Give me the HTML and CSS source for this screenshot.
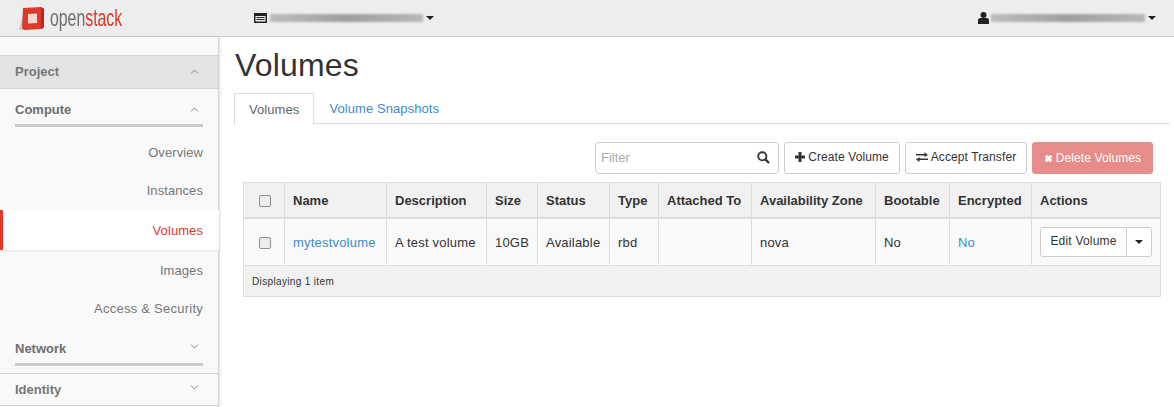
FILE: index.html
```html
<!DOCTYPE html>
<html lang="en">
<head>
    <meta charset="UTF-8">
    <title>Volumes</title>
    <link rel="stylesheet" href="styles.css">
</head>
<body>
    <header class="topbar">
        <div class="brand">
            <svg class="brand-mark" width="26" height="25" viewBox="0 0 26 25">
                <path d="M0 24 L4 9 L5 24 Z" fill="#c9c9c9"/>
                <path d="M4 2 L22 1 L25 3 L25 21 L23 23 L5 24 L3 22 Z" fill="#dc3a2c"/>
                <path d="M22 1 L25 3 L25 21 L22 23 Z" fill="#b9281d"/>
                <path d="M9 8 L18 7.500 L18 17 L9 17.500 Z" fill="#f6d9d3"/>
            </svg>
            <span class="brand-name">open<b>stack</b></span>
        </div>
        <div class="project-picker">
            <svg class="picker-icon" width="13" height="10" viewBox="0 0 13 10">
                <path d="M0 0 H13 V10 H0 Z M1.500 3 V8.500 H11.500 V3 Z M2.500 4 H10.500 V5 H2.500 Z M2.500 6 H10.500 V7 H2.500 Z" fill="#222" fill-rule="evenodd"/>
            </svg>
            <div class="smudge smudge-project"></div>
            <span class="caret"></span>
        </div>
        <div class="user-picker">
            <svg width="11" height="12" viewBox="0 0 11 12">
                <circle cx="5.500" cy="3" r="3" fill="#222"/>
                <path d="M0 12 V8.500 Q0 6 2.500 6 H8.500 Q11 6 11 8.500 V12 Z" fill="#222"/>
            </svg>
            <div class="smudge smudge-user"></div>
            <span class="caret"></span>
        </div>
    </header>

    <div class="layout">
        <nav class="sidebar">
            <div class="panel-head">
                <span>Project</span>
                <svg class="chev" width="9" height="5" viewBox="0 0 9 5"><path d="M1 4.500 L4.500 1 L8 4.500" fill="none" stroke="#888" stroke-width="1"/></svg>
            </div>
            <div class="group-head">
                <span>Compute</span>
                <svg class="chev" width="9" height="5" viewBox="0 0 9 5"><path d="M1 4.500 L4.500 1 L8 4.500" fill="none" stroke="#888" stroke-width="1"/></svg>
            </div>
            <ul class="nav-list">
                <li>Overview</li>
                <li>Instances</li>
                <li class="active">Volumes</li>
                <li>Images</li>
                <li class="wide">Access &amp; Security</li>
            </ul>
            <div class="group-head group-network">
                <span>Network</span>
                <svg class="chev chev-down" width="9" height="5" viewBox="0 0 9 5"><path d="M1 .5 L4.500 4 L8 .5" fill="none" stroke="#888" stroke-width="1"/></svg>
            </div>
            <div class="panel-head panel-identity">
                <span>Identity</span>
                <svg class="chev chev-down" width="9" height="5" viewBox="0 0 9 5"><path d="M1 .5 L4.500 4 L8 .5" fill="none" stroke="#888" stroke-width="1"/></svg>
            </div>
        </nav>

        <main class="content">
            <h1>Volumes</h1>
            <div class="tabs">
                <a class="tab current">Volumes</a>
                <a class="tab">Volume Snapshots</a>
            </div>

            <div class="actions">
                <div class="filter">
                    <span class="placeholder">Filter</span>
                    <svg width="13" height="13" viewBox="0 0 13 13">
                        <circle cx="5.300" cy="5.300" r="4.100" fill="none" stroke="#333" stroke-width="1.900"/>
                        <path d="M8.300 8.300 L12 12" stroke="#333" stroke-width="2.400"/>
                    </svg>
                </div>
                <button class="btn btn-create">
                    <svg width="10" height="10" viewBox="0 0 10 10"><path d="M3.500 0 H6.500 V3.500 H10 V6.500 H6.500 V10 H3.500 V6.500 H0 V3.500 H3.500 Z" fill="#333"/></svg>
                    Create Volume
                </button>
                <button class="btn btn-transfer">
                    <svg width="12" height="10" viewBox="0 0 12 10"><path d="M0 2 H8.500 V0 L12 3 L8.500 5 V3.500 H0 Z M12 6.500 H3.500 V5 L0 7.500 L3.500 10 V8 H12 Z" fill="#333"/></svg>
                    Accept Transfer
                </button>
                <button class="btn btn-delete">
                    <svg width="9" height="9" viewBox="0 0 8 8"><path d="M1 2.500 L2.500 1 L4 2.500 L5.500 1 L7 2.500 L5.500 4 L7 5.500 L5.500 7 L4 5.500 L2.500 7 L1 5.500 L2.500 4 Z" fill="#fff" stroke="#fff" stroke-width=".8"/></svg>
                    Delete Volumes
                </button>
            </div>

            <table class="volumes">
                <colgroup>
                    <col class="c-check"><col class="c-name"><col class="c-desc"><col class="c-size"><col class="c-status"><col class="c-type">
                    <col class="c-attached"><col class="c-zone"><col class="c-boot"><col class="c-enc"><col class="c-actions">
                </colgroup>
                <thead>
                    <tr>
                        <th class="check-cell"><span class="checkbox"></span></th>
                        <th>Name</th>
                        <th>Description</th>
                        <th>Size</th>
                        <th>Status</th>
                        <th>Type</th>
                        <th>Attached To</th>
                        <th>Availability Zone</th>
                        <th>Bootable</th>
                        <th>Encrypted</th>
                        <th>Actions</th>
                    </tr>
                </thead>
                <tbody>
                    <tr>
                        <td class="check-cell"><span class="checkbox"></span></td>
                        <td><a>mytestvolume</a></td>
                        <td>A test volume</td>
                        <td>10GB</td>
                        <td>Available</td>
                        <td>rbd</td>
                        <td></td>
                        <td>nova</td>
                        <td>No</td>
                        <td><a>No</a></td>
                        <td class="action-cell">
                            <div class="split">
                                <span class="split-main">Edit Volume</span>
                                <span class="split-toggle"><span class="caret"></span></span>
                            </div>
                        </td>
                    </tr>
                </tbody>
                <tfoot>
                    <tr><td colspan="11">Displaying 1 item</td></tr>
                </tfoot>
            </table>
        </main>
    </div>
</body>
</html>
```

FILE: styles.css
```css
html, body {
    margin: 0;
    height: 407px;
    overflow: hidden;
}
body {
    font-family: "Liberation Sans", Arial, sans-serif;
    font-size: 13px;
    color: #333;
    background-color: #fff;
}

/* top bar */
.topbar {
    display: flex;
    align-items: center;
    height: 36px;
    background-color: #ededed;
    border-bottom: 1px solid #cfcfcf;
}
.brand {
    display: flex;
    align-items: center;
    width: 254px;
    padding-left: 19px;
    box-sizing: border-box;
}
.brand-mark {
    margin-right: 5px;
}
.brand-name {
    font-size: 24px;
    line-height: 30px;
    color: #6e6e6e;
    display: inline-block;
    transform: scaleX(.66);
    transform-origin: left center;
}
.brand-name b {
    font-weight: normal;
    color: #d9382b;
}
.project-picker {
    display: flex;
    align-items: center;
    flex: 1;
}
.picker-icon {
    margin-right: 3px;
}
.smudge {
    height: 8px;
    background:
        repeating-linear-gradient(90deg, rgba(0,0,0,.12) 0, rgba(0,0,0,.12) 1px, transparent 1px, transparent 2px),
        linear-gradient(90deg, #c9c9c9, #a9a9a9 50%, #c4c4c4);
    filter: blur(.8px);
}
.smudge-project {
    width: 153px;
    margin-right: 3px;
}
.smudge-user {
    width: 154px;
    margin: 0 2px 0 1px;
}
.user-picker {
    display: flex;
    align-items: center;
    gap: 1px;
    margin-right: 18px;
}
.caret {
    display: inline-block;
    width: 0;
    height: 0;
    border-top: 4px solid #222;
    border-left: 4px solid transparent;
    border-right: 4px solid transparent;
}

/* sidebar */
.layout {
    display: flex;
    height: 370px;
}
.sidebar {
    width: 219px;
    flex: none;
    padding-top: 18px;
    box-sizing: border-box;
    background-color: #f9f9f9;
    border-right: 1px solid #d4d4d4;
    box-shadow: 1px 0 2px rgba(0,0,0,0.12);
    color: #777;
}
.panel-head {
    display: flex;
    justify-content: space-between;
    align-items: center;
    height: 30px;
    padding: 0 19px 2px 15px;
    font-weight: bold;
    color: #767676;
    background-color: #e2e3e5;
    border-top: 1px solid #d4d4d4;
    border-bottom: 1px solid #d4d4d4;
}
.group-head {
    display: flex;
    justify-content: space-between;
    align-items: center;
    height: 30px;
    margin: 0 15px;
    padding: 5px 4px 0 0;
    font-weight: bold;
    color: #6e6e6e;
    border-bottom: 3px solid #cccccc;
}
.group-network {
    height: 29px;
    padding-top: 7px;
}
.panel-identity {
    margin-top: 7px;
    height: 31px;
    padding-bottom: 0;
    background-color: transparent;
}
.chev-down {
    position: relative;
    top: -2px;
}
.nav-list {
    list-style: none;
    margin: 6px 0 0;
    padding: 0;
    letter-spacing: .08px;
}
.nav-list li {
    height: 38px;
    line-height: 40px;
    padding-right: 15px;
    text-align: right;
}
.nav-list .wide {
    letter-spacing: .25px;
}
.nav-list .active {
    position: relative;
    height: 40px;
    line-height: 41px;
    margin: 1px -1px 0 0;
    padding-right: 16px;
    color: #e0392b;
    background-color: #fff;
    border-left: 3px solid #e0392b;
    box-shadow: 0 1px 2px rgba(0,0,0,0.1);
}
.nav-list .active + li {
    margin-top: 1px;
}

/* main */
.content {
    flex: 1;
    padding: 0 4px 0 15px;
    min-width: 0;
}
h1 {
    margin: 9px 0 0 1px;
    font-size: 32px;
    font-weight: normal;
    line-height: 38px;
    letter-spacing: .15px;
}
.tabs {
    display: flex;
    margin: 9px 0 0 0;
    height: 30px;
    border-bottom: 1px solid #ddd;
    letter-spacing: .08px;
}
.tab {
    height: 30px;
    line-height: 31px;
    padding: 0 15px;
    color: #428bca;
}
.tab.current {
    color: #666;
    background-color: #fff;
    border: 1px solid #ddd;
    border-bottom: none;
    height: 31px;
    padding: 0 14px;
}

.actions {
    display: flex;
    align-items: stretch;
    gap: 5px;
    margin: 18px 17px 0 361px;
    height: 32px;
}
.filter {
    display: flex;
    align-items: center;
    justify-content: space-between;
    width: 184px;
    padding: 0 8px 2px 5px;
    box-sizing: border-box;
    border: 1px solid #ccc;
    border-radius: 4px;
    background-color: #fff;
}
.placeholder {
    color: #aaa;
}
.btn {
    display: flex;
    align-items: center;
    justify-content: center;
    gap: 3px;
    padding: 0 0 2px;
    font: inherit;
    font-size: 12px;
    letter-spacing: .1px;
    color: #333;
    background-color: #fff;
    border: 1px solid #ccc;
    border-radius: 3px;
}
.btn-create {
    width: 116px;
}
.btn-transfer {
    width: 122px;
}
.btn-delete {
    width: 121px;
    padding: 0;
    color: #fff;
    background-color: #e68d89;
    border-color: #e68d89;
}

/* table */
.volumes {
    border-collapse: collapse;
    table-layout: fixed;
    width: 917px;
    margin: 8px 0 0 9px;
}
.c-check { width: 41px; }
.c-name { width: 102px; }
.c-desc { width: 100px; }
.c-size { width: 51px; }
.c-status { width: 72px; }
.c-type { width: 49px; }
.c-attached { width: 93px; }
.c-zone { width: 124px; }
.c-boot { width: 74px; }
.c-enc { width: 82px; }
.c-actions { width: 129px; }
.volumes th, .volumes td {
    border: 1px solid #ddd;
    padding: 0 8px;
    text-align: left;
    white-space: nowrap;
}
.volumes th {
    height: 34px;
    background-color: #f1f1f1;
    border-bottom: 2px solid #ddd;
    color: #333;
}
.volumes tbody td {
    height: 46px;
    background-color: #f9f9f9;
    letter-spacing: .2px;
}
.volumes tfoot td {
    height: 30px;
    font-size: 10px;
    letter-spacing: .35px;
    background-color: #f1f1f1;
}
.volumes a {
    color: #428bca;
}
.volumes .check-cell {
    padding: 0 0 0 2px;
    text-align: center;
}
.checkbox {
    display: inline-block;
    vertical-align: middle;
    width: 10px;
    height: 10px;
    border: 1px solid #8f8f8f;
    border-radius: 2px;
    background-color: #ededed;
}
.split {
    display: flex;
    height: 28px;
    background-color: #fff;
    border: 1px solid #ccc;
    border-radius: 3px;
    font-size: 12px;
}
.split-main {
    flex: 1;
    line-height: 27px;
    text-align: center;
    border-right: 1px solid #ccc;
}
.split-toggle {
    display: flex;
    align-items: center;
    justify-content: center;
    width: 24px;
}
```
